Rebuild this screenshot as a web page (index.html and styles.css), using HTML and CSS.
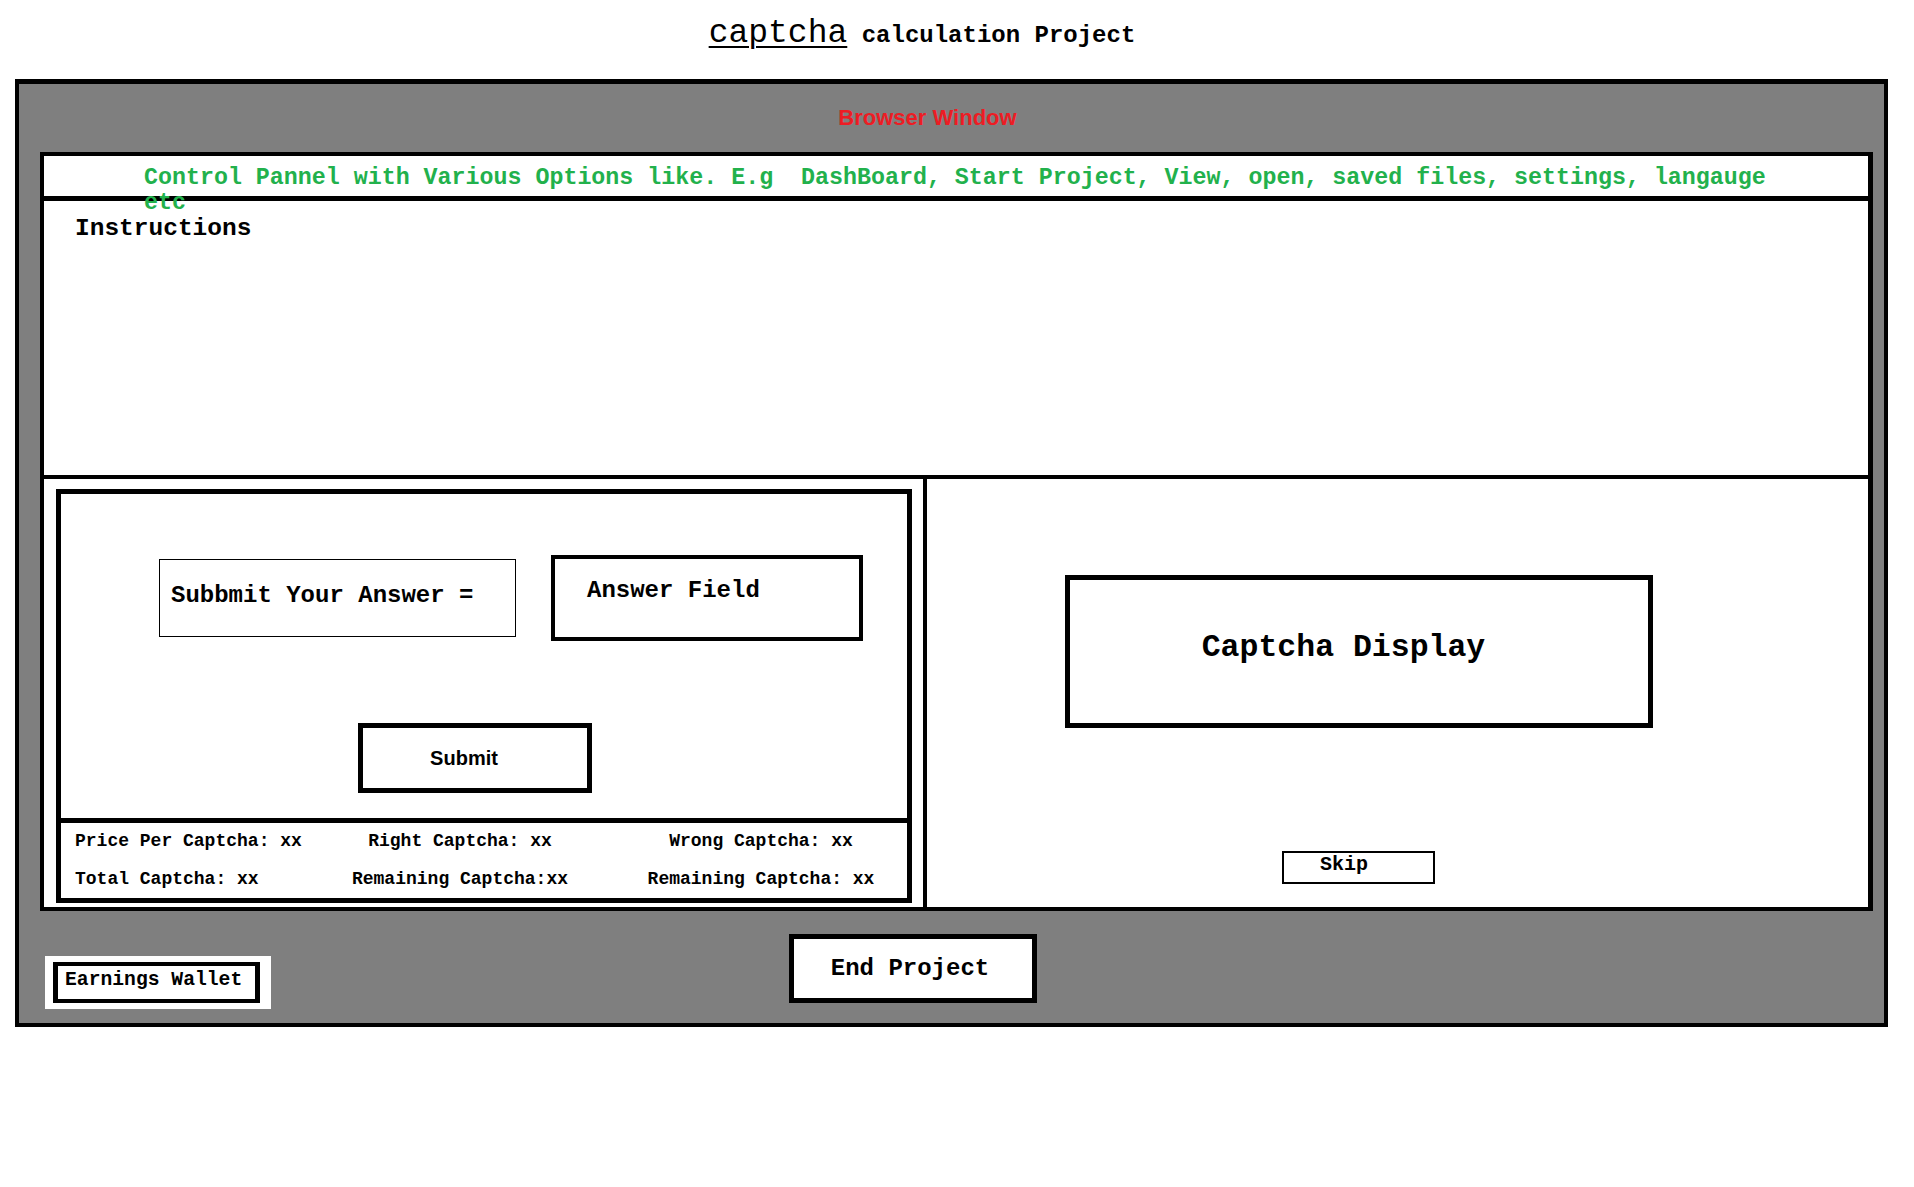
FILE: index.html
```html
<!DOCTYPE html>
<html lang="en">
<head>
  <meta charset="UTF-8" />
  <title>captcha calculation Project</title>
  <link rel="stylesheet" href="styles.css">
</head>
<body>

  <header class="title">
    <span class="title-main">captcha</span><span class="title-sub"> calculation Project</span>
  </header>

  <div class="browser">
    <div class="browser-label">Browser Window</div>

    <div class="app">
      <div class="control-bar">
        <p>Control Pannel with Various Options like. E.g&nbsp; DashBoard, Start Project, View, open, saved files, settings, langauge etc</p>
      </div>

      <div class="instructions">Instructions</div>

      <div class="work">
        <div class="work-left">
          <div class="answer-card">
            <div class="answer-main">
              <div class="answer-row">
                <div class="answer-label">Subbmit Your Answer =</div>
                <div class="answer-field">Answer Field</div>
              </div>
              <button class="submit-btn">Submit</button>
            </div>
            <div class="stats">
              <span>Price Per Captcha: xx</span>
              <span class="center">Right Captcha: xx</span>
              <span class="center">Wrong Captcha: xx</span>
              <span>Total Captcha: xx</span>
              <span class="center">Remaining Captcha:xx</span>
              <span class="center">Remaining Captcha: xx</span>
            </div>
          </div>
        </div>

        <div class="work-right">
          <div class="captcha-box">Captcha Display</div>
          <button class="skip-btn">Skip</button>
        </div>
      </div>
    </div>

    <div class="browser-footer">
      <div class="wallet"><span>Earnings Wallet</span></div>
      <button class="end-btn">End Project</button>
    </div>
  </div>

</body>
</html>
```

FILE: styles.css
```css
body {
  margin: 0;
  background: #fff;
  font-family: "Liberation Mono", "Courier New", monospace;
  color: #000;
}

button {
  font-family: inherit;
  background: #fff;
  color: #000;
  margin: 0;
  padding: 0;
  cursor: pointer;
}

/* page title */
.title {
  box-sizing: border-box;
  height: 79px;
  padding: 15px 70px 0 0;
  text-align: center;
  font-size: 33px;
}
.title-main {
  text-decoration: underline;
  text-decoration-thickness: 2px;
  text-underline-offset: 4px;
}
.title-sub {
  font-size: 24px;
  font-weight: bold;
}

/* grey browser frame */
.browser {
  margin: 0 26px 0 15px;
  border: 4px solid #000;
  border-top-width: 5px;
  background: #7f7f7f;
  padding: 0 11px 0 21px;
}
.browser-label {
  height: 68px;
  display: flex;
  align-items: center;
  justify-content: center;
  padding-right: 58px;
  font-family: "Liberation Sans", Arial, sans-serif;
  font-weight: bold;
  font-size: 22px;
  color: #ed1c24;
}

.app {
  background: #fff;
  border: 4px solid #000;
  border-right-width: 5px;
}

.control-bar {
  box-sizing: border-box;
  height: 45px;
  border-bottom: 5px solid #000;
}
.control-bar p {
  margin: 0;
  padding: 10px 80px 0 100px;
  font-size: 23.3px;
  line-height: 25px;
  font-weight: bold;
  color: #22b14c;
  position: relative;
}

.instructions {
  box-sizing: border-box;
  height: 278px;
  border-bottom: 4px solid #000;
  padding: 14px 0 0 31px;
  font-size: 24.5px;
  font-weight: bold;
}

.work {
  display: flex;
  height: 428px;
}
.work-left {
  width: 879px;
  flex-shrink: 0;
  border-right: 4px solid #000;
  display: flex;
}

.answer-card {
  flex: 1;
  margin: 10px 11px 4px 12px;
  border: 5px solid #000;
  display: flex;
  flex-direction: column;
}
.answer-main {
  flex: 1;
  padding: 61px 0 0 98px;
}
.answer-row {
  display: flex;
  align-items: center;
  gap: 35px;
}
.answer-label {
  box-sizing: border-box;
  width: 357px;
  height: 78px;
  border: 1px solid #000;
  padding: 0 0 6px 11px;
  display: flex;
  align-items: center;
  font-size: 24px;
  font-weight: bold;
}
.answer-field {
  box-sizing: border-box;
  width: 312px;
  height: 86px;
  border: 4px solid #000;
  padding: 18px 0 0 32px;
  font-size: 24px;
  font-weight: bold;
}
.submit-btn {
  display: block;
  box-sizing: border-box;
  width: 234px;
  height: 70px;
  margin: 82px 0 0 199px;
  padding-right: 22px;
  border: 5px solid #000;
  font-family: "Liberation Sans", Arial, sans-serif;
  font-weight: bold;
  font-size: 20px;
}

.stats {
  height: 75px;
  border-top: 5px solid #000;
  padding-left: 14px;
  display: grid;
  grid-template-columns: 230px 310px 1fr;
  line-height: 36px;
  font-size: 18px;
  font-weight: bold;
}
.stats .center {
  text-align: center;
}

.work-right {
  flex: 1;
  display: flex;
  flex-direction: column;
  align-items: center;
  padding: 96px 78px 0 0;
}
.captcha-box {
  box-sizing: border-box;
  width: 588px;
  height: 153px;
  border: 5px solid #000;
  padding: 0 30px 8px 0;
  display: flex;
  align-items: center;
  justify-content: center;
  font-size: 31.5px;
  font-weight: bold;
}
.skip-btn {
  box-sizing: border-box;
  width: 153px;
  height: 33px;
  margin-top: 123px;
  border: 2px solid #000;
  padding-left: 36px;
  font-size: 20px;
  font-weight: bold;
  display: flex;
  align-items: flex-start;
}

/* bottom strip of the frame */
.browser-footer {
  height: 112px;
  display: flex;
  align-items: flex-start;
}
.wallet {
  margin: 45px 0 0 5px;
  background: #fff;
  padding: 6px 11px 6px 8px;
}
.wallet span {
  display: block;
  box-sizing: border-box;
  width: 207px;
  height: 41px;
  border: 4px solid #000;
  border-left-width: 5px;
  border-right-width: 5px;
  padding: 3px 0 0 7px;
  font-size: 19.7px;
  font-weight: bold;
}
.end-btn {
  box-sizing: border-box;
  width: 248px;
  height: 69px;
  margin: 23px 0 0 518px;
  padding-right: 6px;
  border: 5px solid #000;
  font-size: 24px;
  font-weight: bold;
}
```
